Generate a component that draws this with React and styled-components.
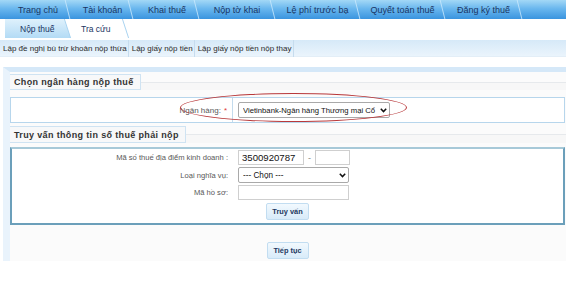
import React from 'react';
import styled, { createGlobalStyle } from 'styled-components';

const Global = createGlobalStyle`
  html, body { margin: 0; padding: 0; background: #fff; }
  body { font-family: "Liberation Sans", Arial, sans-serif; }
  * { box-sizing: border-box; }
`;

const Page = styled.div`
  width: 566px;
`;

const NavBar = styled.nav`
  display: flex;
  height: 19px;
  background: linear-gradient(#a3d8f6 0%, #6ab7ee 45%, #3a94df 100%);
`;

const NavItem = styled.a`
  position: relative;
  display: flex;
  align-items: center;
  justify-content: center;
  flex: none;
  width: ${p => p.$w}px;
  padding-left: ${p => p.$pl || 0}px;
  font-size: 9px;
  color: #1a3563;
  white-space: nowrap;
  &::after {
    content: '';
    position: absolute;
    right: 2px;
    top: 0;
    bottom: 0;
    width: 1px;
    background: rgba(205, 234, 252, 0.8);
    transform: skewX(14deg);
  }
`;

const SubTabs = styled.div`
  display: flex;
  height: 19px;
  padding-left: 5px;
  background: #fff;
`;

const SubTab = styled.a`
  position: relative;
  display: flex;
  align-items: center;
  width: ${p => p.$w}px;
  padding-left: ${p => p.$pl}px;
  font-size: 8.5px;
  color: #1a3563;
  background: ${p => (p.$active ? 'linear-gradient(#dff1fc, #b3dbf5)' : '#fff')};
  clip-path: ${p => (p.$active ? 'polygon(0 0, calc(100% - 6px) 0, 100% 100%, 0 100%)' : 'none')};
  &::after {
    content: '';
    position: absolute;
    right: 3px;
    top: 0;
    bottom: 0;
    width: 1px;
    background: #a9d3f0;
    transform: skewX(18deg);
  }
`;

const ActionBar = styled.div`
  display: flex;
  align-items: center;
  height: 17px;
  margin-top: 2px;
  background: linear-gradient(#d6e9f8, #eaf4fc);
  border-bottom: 1px solid #e3eef7;
`;

const ActionLink = styled.a`
  padding: 0 1px 0 3px;
  font-size: 8px;
  color: #2b2b2b;
  line-height: 17px;
  border-right: 1px solid #c6dcee;
  white-space: nowrap;
`;

const Panel = styled.section`
  margin: 10px 0 0 3px;
  border-left: 7px solid #e9f3fc;
  border-top: 5px solid #d5e8f8;
  background: #fbfbfb;
  padding-bottom: 2px;
`;

const SectionHead = styled.div`
  display: flex;
  align-items: stretch;
  height: ${p => p.$h || 16}px;
  margin-top: ${p => p.$mt || 0}px;
`;

const Legend = styled.div`
  display: flex;
  align-items: center;
  padding: 0 6px 0 4px;
  font-size: 9px;
  font-weight: bold;
  letter-spacing: 0.35px;
  color: #333;
  background: #f7f8f9;
  border: 1px solid #cfe3f2;
  border-left: none;
  white-space: nowrap;
`;

const HeadRule = styled.div`
  flex: 1;
  margin-top: 8px;
  border-top: 1px solid #e6e9ec;
  background: #f7f7f7;
`;

const BankBox = styled.div`
  position: relative;
  display: grid;
  grid-template-columns: 222px 1fr;
  height: 26px;
  margin: 7px 1px 0 0;
  border: 1px solid #b7d6ec;
  background: #fff;
`;

const LabelCell = styled.div`
  display: flex;
  align-items: center;
  justify-content: flex-end;
  padding-right: ${p => p.$pr || 0}px;
  font-size: ${p => p.$fs || 7.6}px;
  color: #585858;
  border-right: ${p => (p.$divider ? '1px solid #c3dbed' : 'none')};
  white-space: nowrap;
`;

const Req = styled.span`
  color: #e23a3a;
  margin-left: 3px;
`;

const FieldCell = styled.div`
  display: flex;
  align-items: center;
  padding-left: ${p => p.$pl || 0}px;
`;

const SelectBox = styled.div`
  display: flex;
  align-items: center;
  gap: 2px;
  width: ${p => p.$w}px;
  height: 16px;
  padding: 0 2px 0 4px;
  border: 1px solid #a9a9a9;
  border-radius: 2px;
  background: #fff;
  font-size: ${p => p.$fs || 8.2}px;
  color: #111;
  white-space: nowrap;
  overflow: hidden;
`;

const SelectText = styled.span`
  flex: 1;
  min-width: 0;
  overflow: hidden;
`;

const Annotation = styled.div`
  position: absolute;
  left: 169px;
  top: -5px;
  width: 227px;
  height: 29px;
  border: 1.6px solid #b8393b;
  border-radius: 50%;
  pointer-events: none;
`;

const QueryBox = styled.div`
  display: grid;
  grid-template-columns: 216px 1fr;
  column-gap: 10px;
  row-gap: 2px;
  margin: 4px 1px 0 0;
  padding: 1px 0 3px;
  border: 2px solid #6b9fba;
  border-top-color: #a7c9d8;
  background: #fff;
`;

const TextInput = styled.div`
  width: ${p => p.$w}px;
  height: 15px;
  padding: 0 3px;
  border: 1px solid #cfcfcf;
  background: #fff;
  font-size: 9.6px;
  line-height: 13px;
  color: #111;
`;

const Dash = styled.span`
  margin: 0 4px;
  font-size: 9px;
  color: #888;
`;

const ButtonRow = styled.div`
  grid-column: 1 / -1;
  display: flex;
  justify-content: center;
  margin-top: ${p => p.$mt || 0}px;
`;

const Button = styled.button`
  width: ${p => p.$w}px;
  height: 17px;
  padding: 0;
  border: 1px solid #c2ddf1;
  border-radius: 2px;
  background: linear-gradient(#f2f9fe, #d8ebf9);
  font-family: "Liberation Sans", Arial, sans-serif;
  font-size: 7.4px;
  font-weight: bold;
  color: #1d3961;
`;

const Footer = styled.div`
  display: flex;
  justify-content: center;
  padding: 17px 1px 0 0;
`;

const Chevron = () => (
  <svg width="7" height="5" viewBox="0 0 7 5" style={{ flex: 'none' }}>
    <path d="M0.8 0.8 L3.5 3.6 L6.2 0.8" fill="none" stroke="#111" strokeWidth="1.5" />
  </svg>
);

const navItems = [
  ['Trang chủ', 70, 6],
  ['Tài khoản', 63, 2],
  ['Khai thuế', 66, 2],
  ['Nộp tờ khai', 76, 0],
  ['Lệ phí trước bạ', 85, 0],
  ['Quyết toán thuế', 85, 0],
  ['Đăng ký thuế', 77, 0],
];

export default function App() {
  return (
    <Page>
      <Global />
      <NavBar>
        {navItems.map(([t, w, pl]) => (
          <NavItem key={t} $w={w} $pl={pl}>{t}</NavItem>
        ))}
      </NavBar>
      <SubTabs>
        <SubTab $active $w={66} $pl={15}>Nộp thuế</SubTab>
        <SubTab $w={58} $pl={10}>Tra cứu</SubTab>
      </SubTabs>
      <ActionBar>
        <ActionLink>Lập đề nghị bù trừ khoản nộp thừa</ActionLink>
        <ActionLink>Lập giấy nộp tiền</ActionLink>
        <ActionLink>Lập giấy nộp tiền nộp thay</ActionLink>
      </ActionBar>
      <Panel>
        <SectionHead $mt={2} $h={16}>
          <Legend>Chọn ngân hàng nộp thuế</Legend>
          <HeadRule />
        </SectionHead>
        <BankBox>
          <LabelCell $divider $pr={5} $fs={8}>
            Ngân hàng:<Req>*</Req>
          </LabelCell>
          <FieldCell $pl={5}>
            <SelectBox $w={152} $fs={7.7}>
              <SelectText>Vietinbank-Ngân hàng Thương mại Cổ</SelectText>
              <Chevron />
            </SelectBox>
          </FieldCell>
          <Annotation />
        </BankBox>
        <SectionHead $mt={3} $h={17}>
          <Legend>Truy vấn thông tin số thuế phải nộp</Legend>
          <HeadRule />
        </SectionHead>
        <QueryBox>
          <LabelCell>Mã số thuế địa điểm kinh doanh :</LabelCell>
          <FieldCell>
            <TextInput $w={66}>3500920787</TextInput>
            <Dash>-</Dash>
            <TextInput $w={35} />
          </FieldCell>
          <LabelCell>Loại nghĩa vụ:</LabelCell>
          <FieldCell>
            <SelectBox $w={111}>
              <SelectText>--- Chọn ---</SelectText>
              <Chevron />
            </SelectBox>
          </FieldCell>
          <LabelCell>Mã hồ sơ:</LabelCell>
          <FieldCell>
            <TextInput $w={111} />
          </FieldCell>
          <ButtonRow $mt={1}>
            <Button $w={43}>Truy vấn</Button>
          </ButtonRow>
        </QueryBox>
        <Footer>
          <Button $w={42}>Tiếp tục</Button>
        </Footer>
      </Panel>
    </Page>
  );
}
